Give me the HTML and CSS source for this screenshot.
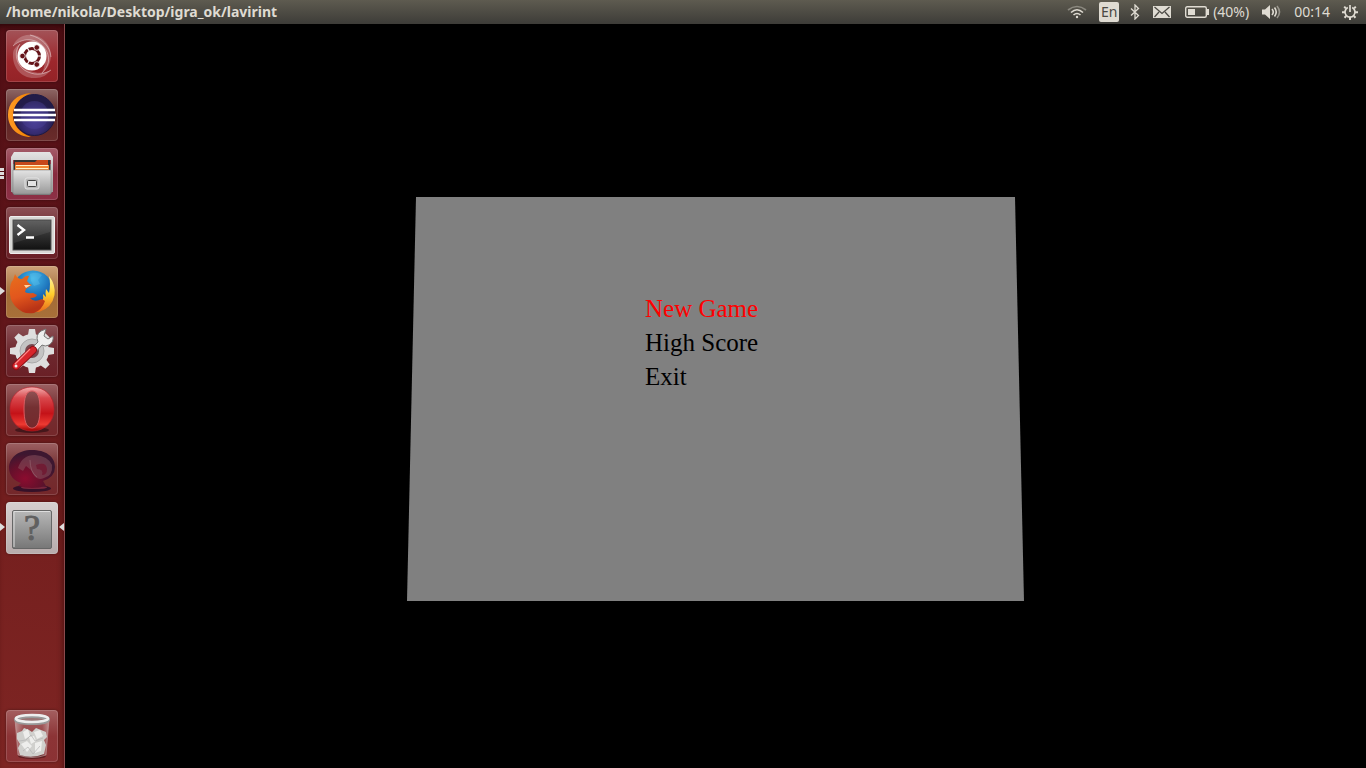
FILE: index.html
```html
<!DOCTYPE html>
<html lang="en">
<head>
<meta charset="utf-8">
<title>lavirint</title>
<link rel="stylesheet" href="styles.css">
</head>
<body>
<svg class="defs" width="0" height="0" aria-hidden="true">
  <defs>
    <linearGradient id="silver" x2="0" y2="1"><stop stop-color="#e4e4e4"/><stop offset="1" stop-color="#999"/></linearGradient>
    <linearGradient id="screen" x2="0" y2="1"><stop stop-color="#555"/><stop offset=".5" stop-color="#303030"/><stop offset="1" stop-color="#111"/></linearGradient>
    <radialGradient id="navy" cy=".65"><stop stop-color="#4b3f96"/><stop offset=".6" stop-color="#352b70"/><stop offset="1" stop-color="#221c48"/></radialGradient>
    <linearGradient id="amber" x2="1" y2="0"><stop stop-color="#ff9b25"/><stop offset="1" stop-color="#f08000"/></linearGradient>
    <radialGradient id="globe" cx=".5" cy=".2" r=".8"><stop stop-color="#42b8ea"/><stop offset=".6" stop-color="#1768b4"/><stop offset="1" stop-color="#12306e"/></radialGradient>
    <linearGradient id="fox" x2=".3" y2="1"><stop stop-color="#e8701c"/><stop offset=".6" stop-color="#e2561d"/><stop offset="1" stop-color="#b93416"/></linearGradient>
    <linearGradient id="flame" x2="0" y2="1"><stop stop-color="#fff7a0"/><stop offset=".5" stop-color="#ffce2d"/><stop offset="1" stop-color="#ea691c"/></linearGradient>
    <linearGradient id="opera" x2="0" y2="1"><stop stop-color="#f3b0b0"/><stop offset=".25" stop-color="#d9474c"/><stop offset=".6" stop-color="#c41218"/><stop offset=".85" stop-color="#ed3a32"/><stop offset="1" stop-color="#900"/></linearGradient>
    <radialGradient id="wine" cx=".35" cy=".75" r=".65"><stop stop-color="#8c0c2f"/><stop offset=".55" stop-color="#65102b"/><stop offset="1" stop-color="#3d1730"/></radialGradient>
    <linearGradient id="plate" x2="0" y2="1"><stop stop-color="#b8b8b8"/><stop offset="1" stop-color="#777"/></linearGradient>
    <linearGradient id="glass" x2="1" y2="0"><stop stop-color="#fff" stop-opacity=".4"/><stop offset=".25" stop-color="#fff" stop-opacity=".08"/><stop offset=".8" stop-color="#fff" stop-opacity=".08"/><stop offset="1" stop-color="#fff" stop-opacity=".4"/></linearGradient>
  </defs>
</svg>

<header class="panel">
  <h1 class="panel-title">/home/nikola/Desktop/igra_ok/lavirint</h1>
  <div class="indicators">
    <button class="indicator wifi" aria-label="Network">
      <svg width="20" height="16" viewBox="0 0 20 16" fill="none" stroke="#dfdbd2" stroke-width="1.6"><path d="M1 6Q10-1 19 6" opacity=".4"/><path d="M4 8.500Q10 3 16 8.500M6.500 11Q10 8 13.500 11"/><circle cx="10" cy="13" r="1.200" fill="#dfdbd2" stroke="none"/></svg>
    </button>
    <button class="indicator language">En</button>
    <button class="indicator bluetooth" aria-label="Bluetooth">
      <svg width="10" height="16" viewBox="0 0 10 16" fill="none" stroke="#dfdbd2" stroke-width="1.300"><path d="M1 4.500 8.500 11.500 5 15V1L8.500 4.500 1 11.500"/></svg>
    </button>
    <button class="indicator mail" aria-label="Messages">
      <svg width="18" height="12" viewBox="0 0 18 12"><path fill="#dfdbd2" d="M0 0H18V12H0Z"/><path d="M1.500 1 9 7.500 16.500 1M1.500 11 6 6M16.500 11 12 6" fill="none" stroke="#4b4943" stroke-width="1.300"/></svg>
    </button>
    <button class="indicator battery">
      <svg width="25" height="12" viewBox="0 0 25 12"><rect x=".7" y=".7" width="20.600" height="10.600" rx="1.500" fill="none" stroke="#dfdbd2" stroke-width="1.400"/><path d="M3 3H10V9H3ZM22 3H24V9H22Z" fill="#dfdbd2"/></svg>
      <span>(40%)</span>
    </button>
    <button class="indicator sound" aria-label="Sound">
      <svg width="20" height="14" viewBox="0 0 20 14"><path fill="#dfdbd2" d="M0 4.500H3L8 0V14L3 9.500H0Z"/><g fill="none" stroke="#dfdbd2" stroke-width="1.600"><path d="M10 4Q12.500 7 10 10M12.500 2.500Q16 7 12.500 11.500"/><path d="M15 1Q20 7 15 13" opacity=".5"/></g></svg>
    </button>
    <button class="indicator clock">00:14</button>
    <button class="indicator power" aria-label="Session">
      <svg width="16" height="16" viewBox="0 0 16 16" fill="none" stroke="#dfdbd2"><path stroke-width="1.700" d="M5.800 3.600A5 5 0 1 0 10.200 3.600M8 1V8"/><path stroke-width="2" d="M3.800 4.200 2.200 2.600M12.200 4.200 13.800 2.600M3 8.200H0M13 8.200H16M4.200 12 2.500 13.700M11.800 12 13.500 13.700M8 13V16"/></svg>
    </button>
  </div>
</header>

<div class="desktop">
  <nav class="launcher" aria-label="Launcher">
    <button class="tile tile-dash" aria-label="Dash">
      <svg viewBox="0 0 52 52"><g fill="#fff"><path opacity=".22" d="M17 6C31 1 46 12 45 27 44 35 41 39 36 43 42 31 38 17 26 11 20 9 13 10 7 16 9 11 12 8 17 6Z"/><path opacity=".22" d="M7 24C6 37 15 49 30 48 36 48 41 45 45 40 36 45 24 43 16 36 11 31 10 21 14 14 9 17 7 20 7 24Z"/></g><g fill="none" stroke="#fff" opacity=".4"><path d="M7 16C18 6 34 8 41 22 44 29 43 36 36 43M14 14C6 24 12 38 22 42 31 46 39 44 45 40M24 5C36 8 44 16 45 27"/></g><circle cx="26" cy="26" r="14.500" fill="#fff"/><circle cx="26" cy="26" r="7.500" fill="none" stroke="#65141a" stroke-width="3"/><path d="M26 26 39 26M26 26 19.500 14.700M26 26 19.500 37.300" stroke="#fff" stroke-width="1.200"/><g fill="#65141a" stroke="#fff" stroke-width=".8"><circle cx="16.500" cy="26" r="2.800"/><circle cx="30.800" cy="17.500" r="2.800"/><circle cx="30.800" cy="34.500" r="2.800"/></g></svg>
    </button>
    <button class="tile tile-eclipse" aria-label="Eclipse">
      <svg viewBox="0 0 52 52"><path fill="url(#amber)" d="M25 4C10 5 2 14 2 26S11 48 25 48C12 43 7 35 7 26S13 9 25 4Z"/><circle cx="28.500" cy="26" r="20.500" fill="url(#navy)" stroke="#1d1945"/><circle cx="28.500" cy="26" r="14" fill="#5148a0" opacity=".35"/><path stroke="#fff" stroke-width="2.400" d="M8 21H49M7 26H50M8 31H49"/></svg>
    </button>
    <button class="tile tile-files" aria-label="Files">
      <svg viewBox="0 0 52 52"><path fill="#777" d="M5 16V43L8 47H44L47 43V16Z"/><path fill="url(#silver)" d="M8 4H44L47 9V44H45V12H7V44H5V9Z"/><path fill="#343434" d="M8 12H44V23H8Z"/><path fill="#c6481a" d="M10 14H29L31 12H42V23H9V14Z"/><path fill="#f48b35" d="M9 17H43V23H9Z"/><path stroke="#fff0c5" d="M10 17.500H42M10 20.500H42"/><path fill="url(#silver)" stroke="#888" stroke-width=".6" d="M7 22H45V44Q45 46 43 46H9Q7 46 7 44Z"/><rect x="19" y="30" width="14" height="11" rx="2" fill="#bbb" stroke="#e4e4e4"/><rect x="21.500" y="32.500" width="9" height="6" rx="1" fill="#e4e4e4" stroke="#444"/></svg>
    </button>
    <button class="tile tile-terminal" aria-label="Terminal">
      <svg viewBox="0 0 52 52"><rect x="3.500" y="9.500" width="45" height="37" rx="1.500" fill="#d8d8d5" stroke="#eee"/><rect x="7" y="13" width="38" height="30" fill="url(#screen)" stroke="#555"/><path fill="#fff" opacity=".08" d="M8 14H44V25L8 36Z"/><path fill="none" stroke="#fff" stroke-width="2.400" d="M11.500 18 18 23 11.500 28M20 30.500H28"/></svg>
    </button>
    <button class="tile tile-firefox" aria-label="Firefox">
      <svg viewBox="0 0 52 52"><circle cx="27" cy="24.500" r="20" fill="url(#globe)"/><path fill="#63c5ee" opacity=".35" d="M24 8Q31 5 36 9L32 14 34 18 28 20 25 15Z"/><path fill="url(#flame)" d="M43 10Q50 19 48.500 29 46 42 33 46L24 46Q35 43 38 36L36 37Q38 32 37 28L40 31Q39 27 40 23L43 27Q45 18 43 10Z"/><path fill="url(#fox)" d="M9 8Q11 13 16 13 20 9 23 10L21 15Q23 18 26 19 23 21 20 23L19 26Q22 28 27 27L31 29Q30 32 24 32 28 37 36 33L39 35Q36 44 28 47 17 49 9 40 3 33 4 24 4 17 7 14Z"/><path fill="#ffd3a0" d="M18 19 25 19 20 22Z"/></svg>
    </button>
    <button class="tile tile-settings" aria-label="System Settings">
      <svg viewBox="0 0 52 52"><g transform="translate(26 26)" fill="#dedede"><circle r="17"/><path d="M-4-16-3-22H3L4-16ZM-4 16-3 22H3L4 16ZM-16-4-22-3V3L-16 4ZM16-4 22-3V3L16 4Z"/><path transform="rotate(45)" d="M-4-16-3-22H3L4-16ZM-4 16-3 22H3L4 16ZM-16-4-22-3V3L-16 4ZM16-4 22-3V3L16 4Z"/></g><circle cx="26" cy="26" r="12" fill="#c4c4c4" stroke="#aaa"/><circle cx="26" cy="26" r="7" fill="#76484f"/><path fill="#eee" stroke="#777" d="M24 25 32 17Q29 10 35 6L40 4 38 11 42 14 47 11Q48 17 43 20 39 22 36 20L28 29Z"/><path stroke="#8d1016" stroke-width="8" stroke-linecap="round" d="M10 41 27 25"/><path stroke="#d7252b" stroke-width="6" stroke-linecap="round" d="M10 41 27 25"/><path stroke="#f88" stroke-width="1.200" d="M9 39 24 24"/><circle cx="10" cy="41" r="1.500" fill="#eee"/></svg>
    </button>
    <button class="tile tile-opera" aria-label="Opera">
      <svg viewBox="0 0 52 52"><ellipse cx="26" cy="46" rx="17" ry="3" fill="#301014" opacity=".7"/><path fill="url(#opera)" fill-rule="evenodd" stroke="#b5202a" stroke-width=".7" d="M26 3C13 3 4 12 4 25S13 47 26 47 48 38 48 25 39 3 26 3ZM26 7C32 7 34 14 34 25S32 44 26 44 18 36 18 25 20 7 26 7Z"/><path fill="none" stroke="#ff9999" stroke-width=".5" d="M26 7C20 7 18 14 18 25S20 44 26 44 34 36 34 25 32 7 26 7Z"/></svg>
    </button>
    <button class="tile tile-orb" aria-label="Game">
      <svg viewBox="0 0 52 52"><ellipse cx="26" cy="45.500" rx="19" ry="3.500" fill="#351128"/><ellipse cx="28" cy="44.500" rx="13" ry="1.600" fill="#78263c"/><path fill="url(#wine)" d="M26 7C12 7 3 15 3 25 3 32 8 38 15 40L12 43Q26 47 40 43L37 38Q49 34 49 24C49 13 39 7 26 7Z"/><path fill="#87515d" opacity=".55" d="M12 25Q16 12 29 12 42 13 46 22 47 33 38 35 31 38 27 31L25 27 20 23 17 28Z"/><path fill="#701c34" d="M30 22Q40 18 41 26 41 32 36 32 38 26 31 26Z"/><path fill="none" stroke="#91606b" stroke-width=".7" d="M24 17Q24 29 31 34"/></svg>
    </button>
    <button class="tile tile-unknown" aria-label="lavirint">
      <svg viewBox="0 0 52 52"><rect x="6.500" y="8.500" width="39" height="38" rx="1.500" fill="url(#plate)" stroke="#666"/><path fill="none" stroke="#ddd" d="M8 45V9.500H44"/><text class="question" x="26" y="38" text-anchor="middle">?</text></svg>
    </button>
    <button class="tile tile-trash" aria-label="Trash">
      <svg viewBox="0 0 52 52"><ellipse cx="26" cy="46" rx="14" ry="3" fill="#451216" opacity=".6"/><path fill="url(#glass)" stroke="#c4a5a5" stroke-width=".6" d="M9 9 12 45Q26 50 40 45L43 9Z"/><path fill="#d0d0cd" d="M11 23 16 21 18 18 23 20 26 22 30 18 35 20 40 22 41 27 38 30 40 35 38 44Q26 49 14 45L12 38 14 34 11 29Z"/><path fill="#eeeeec" d="M17 22 22 19 24 26 19 29ZM28 22 34 20 37 26 31 29ZM15 34 21 31 26 36 21 42ZM29 33 36 31 35 41 29 43ZM23 27 28 26 30 31 25 34Z"/><path fill="none" stroke="#b5b5b5" stroke-width=".7" d="M13 31 20 30 25 25 29 31 37 28M17 41 22 37 27 44 34 36"/><ellipse cx="26" cy="9.500" rx="16" ry="3.500" fill="#9a7474" stroke="#999" stroke-width="4"/><ellipse cx="26" cy="8.500" rx="16" ry="3.500" fill="none" stroke="#eee" stroke-width="2.600"/></svg>
    </button>
  </nav>

  <main class="game">
    <div class="board">
      <div class="menu">
        <button class="menu-item selected">New Game</button>
        <button class="menu-item">High Score</button>
        <button class="menu-item">Exit</button>
      </div>
    </div>
  </main>
</div>
</body>
</html>
```
FILE: styles.css
```css
* { box-sizing: border-box; }

body {
  margin: 0;
  height: 100vh;
  display: flex;
  flex-direction: column;
  overflow: hidden;
  background: #000;
  font-family: "Noto Sans", sans-serif;
}

button {
  margin: 0;
  padding: 0;
  border: 0;
  background: none;
  font: inherit;
  color: inherit;
}

svg { display: block; }
.defs { position: absolute; }

.panel {
  flex: none;
  height: 24px;
  display: flex;
  align-items: center;
  justify-content: space-between;
  padding: 0 8px 0 6px;
  background: linear-gradient(#5e5b50, #3d3c38);
  color: #dfdbd2;
  font-size: 14px;
  line-height: 24px;
}

.panel-title {
  margin: 0;
  font-size: 14px;
  font-weight: 700;
}

.indicators { display: flex; align-items: center; }
.indicator { display: flex; align-items: center; }
.wifi { margin-right: 12px; }
.language {
  width: 20px;
  height: 20px;
  justify-content: center;
  margin-right: 11px;
  border-radius: 2px;
  background: #dfdbd2;
  color: #4b4943;
}
.bluetooth { margin-right: 13px; }
.mail { margin-right: 14px; }
.battery { gap: 3px; margin-right: 13px; }
.sound { margin-right: 12px; }
.clock { margin-right: 12px; }

.desktop { flex: 1; min-height: 0; display: flex; }

.launcher {
  flex: none;
  width: 65px;
  display: flex;
  flex-direction: column;
  gap: 7px;
  padding: 6px;
  border-right: 1px solid #8a4a4d;
  background: linear-gradient(10deg, #7e2523, #76201f 30%, #5e1419 65%, #530f15);
  box-shadow: inset 0 6px 6px -4px #2a0508, inset -6px 0 6px -5px rgba(30, 0, 0, .4);
}

.tile {
  position: relative;
  flex: none;
  width: 52px;
  height: 52px;
  border-radius: 4px;
  background: linear-gradient(#8c5156, #6d282f 50%, #6a2026);
  box-shadow: inset 0 0 0 1px rgba(255, 255, 255, .15), 0 0 3px rgba(0, 0, 0, .4);
}
.tile svg { width: 100%; height: 100%; }
.tile-dash { background: linear-gradient(#a35358, #9d272c 60%, #942327); }
.tile-eclipse { background: linear-gradient(#8d6664, #5b2424 50%, #6a2c2b); }
.tile-files { background: linear-gradient(#a45c69, #872a3e 50%, #8d3046); }
.tile-firefox { background: linear-gradient(#cda178, #a36c37 55%, #a87039); }
.tile-opera, .tile-orb { background: linear-gradient(#9c6062, #743032 45%, #74272a); }
.tile-unknown { background: linear-gradient(#d6d0d0, #b7abab); }
.tile-trash { margin-top: auto; background: linear-gradient(#a45f60, #8c3436 50%, #8b3234); }

.question {
  font: 36px "Liberation Serif", serif;
  fill: #606060;
  stroke: #606060;
  stroke-width: 1px;
}

.tile-files::before {
  content: "";
  position: absolute;
  left: -6px;
  top: 20px;
  width: 4px;
  height: 11px;
  background: repeating-linear-gradient(#ddd 0 3px, transparent 3px 4px);
}

.tile-firefox::before,
.tile-unknown::before,
.tile-unknown::after {
  content: "";
  position: absolute;
  top: 21px;
  left: -6px;
  border: solid transparent;
  border-width: 4px 0 4px 5px;
  border-left-color: #ddd;
}
.tile-unknown::after {
  left: auto;
  right: -6px;
  border-width: 4px 5px 4px 0;
  border-right-color: #ddd;
}

.game {
  flex: 1;
  display: flex;
  align-items: center;
  justify-content: center;
  padding-top: 6px;
}

.board {
  width: 617px;
  max-width: 100%;
  min-height: 404px;
  padding: 95px 0 0 238px;
  background: #808080;
  clip-path: polygon(9px 0, calc(100% - 9px) 0, 100% 100%, 0 100%);
}

.menu { display: flex; flex-direction: column; align-items: flex-start; }

.menu-item {
  color: #000;
  font: 25px/34px "Liberation Serif", serif;
}
.menu-item.selected { color: #f00; }
```
